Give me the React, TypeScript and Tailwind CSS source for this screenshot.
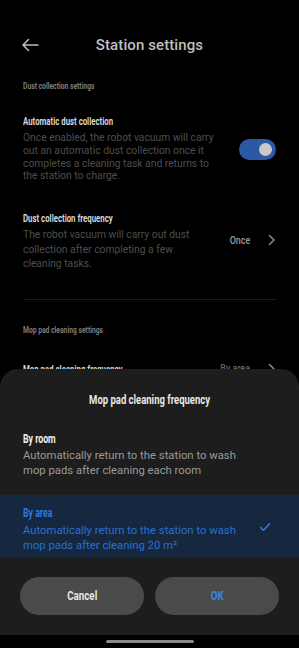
import React from "react";

const body = { fontFamily: 'Roboto, "Noto Sans", sans-serif' };

function Chevron({ className = "" }: { className?: string }) {
  return (
    <svg width="8" height="12" viewBox="0 0 8 12" className={className}>
      <path d="M1.5 1.5 L6 6 L1.5 10.5" fill="none" stroke="currentColor" strokeWidth="1.5" strokeLinecap="round" strokeLinejoin="round" />
    </svg>
  );
}

export default function App() {
  return (
    <div className="relative w-[299px] h-[648px] bg-black overflow-hidden" style={body}>
      {/* Header */}
      <div className="relative h-[90px] flex items-center justify-center">
        <svg width="18" height="14" viewBox="0 0 18 14" className="absolute left-[21px] top-[38px] text-[#bdbdbd]">
          <path d="M17 7 H2 M7.5 1.5 L2 7 L7.5 12.5" fill="none" stroke="currentColor" strokeWidth="1.5" strokeLinecap="round" strokeLinejoin="round" />
        </svg>
        <div className="text-[15px] font-medium text-[#bfbfbf] tracking-[0.1px]">Station settings</div>
      </div>

      <div className="px-[23px]">
        <div className="text-[9.5px] font-bold text-[#7c7c7c] leading-[12px] -mt-[10px]">
          <span className="inline-block whitespace-nowrap origin-left scale-x-[0.71]">Dust collection settings</span>
        </div>

        {/* Automatic dust collection */}
        <div className="mt-[22px] flex items-center">
          <div className="w-[205px]">
            <div className="text-[11.5px] font-bold text-[#d6d6d6] leading-[14px]">
              <span className="inline-block whitespace-nowrap origin-left scale-x-[0.68]">Automatic dust collection</span>
            </div>
            <div className="mt-[4px] text-[10.3px] leading-[12.8px] text-[#4e4e4e]">
              Once enabled, the robot vacuum will carry out an automatic dust collection once it completes a cleaning task and returns to
              <br />
              the station to charge.
            </div>
          </div>
          <div className="ml-auto w-[37px] h-[21px] rounded-full bg-[#2c58a6] flex items-center justify-end pr-[4px] mt-[2px]">
            <div className="w-[13px] h-[13px] rounded-full bg-[#c9c9c9]" />
          </div>
        </div>

        {/* Dust collection frequency */}
        <div className="mt-[28px] flex items-center">
          <div className="w-[186px]">
            <div className="text-[11.5px] font-bold text-[#d6d6d6] leading-[14px]">
              <span className="inline-block whitespace-nowrap origin-left scale-x-[0.68]">Dust collection frequency</span>
            </div>
            <div className="mt-[3px] text-[10.3px] leading-[14.5px] text-[#4e4e4e]">
              The robot vacuum will carry out dust collection after completing a few cleaning tasks.
            </div>
          </div>
          <div className="ml-auto flex items-center gap-[18px] -mt-[2px]">
            <span className="inline-block origin-right scale-x-[0.85] text-[10.5px] font-medium text-[#9a9a9a]">Once</span>
            <Chevron className="text-[#8a8a8a]" />
          </div>
        </div>

        <div className="mt-[27px] h-px bg-[#1c1c1c]" />

        <div className="mt-[24px] text-[9.5px] font-bold text-[#7c7c7c] leading-[12px]">
          <span className="inline-block whitespace-nowrap origin-left scale-x-[0.71]">Mop pad cleaning settings</span>
        </div>

        <div className="mt-[25px] flex items-center">
          <div className="text-[11.5px] font-bold text-[#d6d6d6] leading-[14px]">
            <span className="inline-block whitespace-nowrap origin-left scale-x-[0.68]">Mop pad cleaning frequency</span>
          </div>
          <div className="ml-auto flex items-center gap-[18px]">
            <span className="inline-block origin-right scale-x-[0.85] text-[10.5px] font-medium text-[#666]">By area</span>
            <Chevron className="text-[#8a8a8a]" />
          </div>
        </div>
      </div>

      {/* Bottom sheet */}
      <div className="absolute left-0 right-0 top-[369px] h-[266px] bg-[#1d1d1d] rounded-t-[18px] flex flex-col">
        <div className="pt-[24px] text-center text-[12.5px] font-bold text-[#e8e8e8] leading-[14px]">
          <span className="inline-block whitespace-nowrap origin-center scale-x-[0.76]">Mop pad cleaning frequency</span>
        </div>

        <div className="px-[23px] mt-[25px]">
          <div className="text-[12.5px] font-bold text-[#f0f0f0] leading-[14px]">
            <span className="inline-block whitespace-nowrap origin-left scale-x-[0.7]">By room</span>
          </div>
          <div className="mt-[2px] w-[215px] text-[11.3px] leading-[15px] text-[#9a9a9a]">
            Automatically return to the station to wash mop pads after cleaning each room
          </div>
        </div>

        <div className="mt-[17px] h-[63px] bg-[#15283f] px-[23px] pt-[5px] flex items-center">
          <div className="w-[220px]">
            <div className="text-[12.5px] font-bold text-[#2f78dc] leading-[14px]">
              <span className="inline-block whitespace-nowrap origin-left scale-x-[0.7]">By area</span>
            </div>
            <div className="mt-[3px] text-[11.3px] leading-[15px] text-[#2a6fcf]">
              Automatically return to the station to wash mop pads after cleaning 20 m²
            </div>
          </div>
          <svg width="12" height="10" viewBox="0 0 12 10" className="ml-auto mr-[5px] -mt-[4px] text-[#3a7fe0]">
            <path d="M1.5 5.5 L4.5 8.2 L10.5 1.8" fill="none" stroke="currentColor" strokeWidth="1.4" strokeLinecap="round" strokeLinejoin="round" />
          </svg>
        </div>

        <div className="mt-[19px] px-[20px] flex gap-[11px]">
          <div className="flex-1 h-[38px] rounded-full bg-[#4a4a4a] flex items-center justify-center text-[12.5px] font-bold text-[#e6e6e6]">
            <span className="inline-block origin-center scale-x-[0.78]">Cancel</span>
          </div>
          <div className="flex-1 h-[38px] rounded-full bg-[#4a4a4a] flex items-center justify-center text-[12.5px] font-bold text-[#3b82e6]">
            <span className="inline-block origin-center scale-x-[0.78]">OK</span>
          </div>
        </div>
      </div>

      {/* Nav strip */}
      <div className="absolute left-0 right-0 top-[635px] h-[13px] bg-black flex justify-center pt-[5px]">
        <div className="w-[88px] h-[3px] rounded-full bg-[#8a8a8a]" />
      </div>
    </div>
  );
}
